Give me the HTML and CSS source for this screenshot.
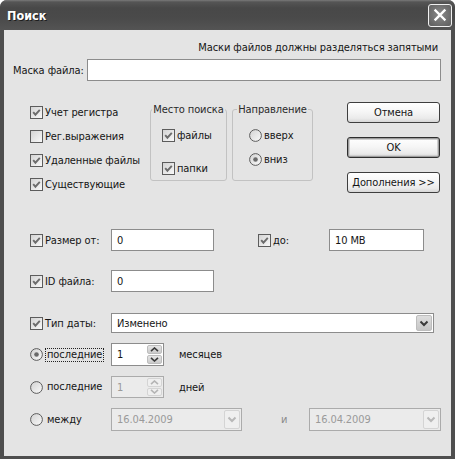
FILE: index.html
```html
<!DOCTYPE html>
<html lang="ru">
<head>
<meta charset="utf-8">
<title>Поиск</title>
<link rel="stylesheet" href="styles.css">
</head>
<body>
<svg class="defs" width="0" height="0" aria-hidden="true">
  <defs>
    <linearGradient id="boxg" x1="0" y1="0" x2="1" y2="1">
      <stop offset="0" stop-color="#d2d2d2"/>
      <stop offset="1" stop-color="#fafafa"/>
    </linearGradient>
    <symbol id="cb-on" viewBox="0 0 13 13">
      <rect x="0.5" y="0.5" width="12" height="12" fill="url(#boxg)" stroke="#5c5c5c"/>
      <path d="M3.2 6.2 L5.4 8.7 L9.8 3.8" fill="none" stroke="#6c6c6c" stroke-width="1.9"/>
    </symbol>
    <symbol id="cb-off" viewBox="0 0 13 13">
      <rect x="0.5" y="0.5" width="12" height="12" fill="url(#boxg)" stroke="#5c5c5c"/>
    </symbol>
    <symbol id="rb-on" viewBox="0 0 13 13">
      <circle cx="6.5" cy="6.5" r="5.9" fill="url(#boxg)" stroke="#5c5c5c"/>
      <circle cx="6.5" cy="6.5" r="2.3" fill="#6a6a6a"/>
    </symbol>
    <symbol id="rb-off" viewBox="0 0 13 13">
      <circle cx="6.5" cy="6.5" r="5.9" fill="url(#boxg)" stroke="#5c5c5c"/>
    </symbol>
  </defs>
</svg>

<div class="window">
  <div class="titlebar">
    <span class="title">Поиск</span>
    <span class="close">
      <svg width="14" height="14" viewBox="0 0 14 14"><path d="M2.5 2.5 L11.5 11.5 M11.5 2.5 L2.5 11.5" stroke="#fff" stroke-width="2.4" stroke-linecap="square"/></svg>
    </span>
  </div>

  <div class="client">
    <div class="hint">Маски файлов должны разделяться запятыми</div>

    <div class="mask-row">
      <span class="mask-label">Маска файла:</span>
      <div class="field mask-input"></div>
    </div>

    <div class="section">
      <div class="opts">
        <div class="opt"><svg class="cb"><use href="#cb-on"/></svg><span>Учет регистра</span></div>
        <div class="opt"><svg class="cb"><use href="#cb-off"/></svg><span>Рег.выражения</span></div>
        <div class="opt"><svg class="cb"><use href="#cb-on"/></svg><span>Удаленные файлы</span></div>
        <div class="opt"><svg class="cb"><use href="#cb-on"/></svg><span>Существующие</span></div>
      </div>

      <fieldset class="group g1">
        <legend>Место поиска</legend>
        <div class="gopt g1-a"><svg class="cb"><use href="#cb-on"/></svg><span>файлы</span></div>
        <div class="gopt g1-b"><svg class="cb"><use href="#cb-on"/></svg><span>папки</span></div>
      </fieldset>

      <fieldset class="group g2">
        <legend>Направление</legend>
        <div class="gopt g2-a"><svg class="cb"><use href="#rb-off"/></svg><span>вверх</span></div>
        <div class="gopt g2-b"><svg class="cb"><use href="#rb-on"/></svg><span>вниз</span></div>
      </fieldset>

      <div class="buttons">
        <div class="btn">Отмена</div>
        <div class="btn default">OK</div>
        <div class="btn">Дополнения &gt;&gt;</div>
      </div>
    </div>

    <div class="row row-size">
      <div class="lead"><svg class="cb"><use href="#cb-on"/></svg><span>Размер от:</span></div>
      <div class="field w-small"><span class="val">0</span></div>
      <div class="lead lead-to"><svg class="cb"><use href="#cb-on"/></svg><span>до:</span></div>
      <div class="field w-to"><span class="val">10 MB</span></div>
    </div>

    <div class="row row-id">
      <div class="lead"><svg class="cb"><use href="#cb-on"/></svg><span>ID файла:</span></div>
      <div class="field w-small"><span class="val">0</span></div>
    </div>

    <div class="row row-type">
      <div class="lead"><svg class="cb"><use href="#cb-on"/></svg><span>Тип даты:</span></div>
      <div class="field combo w-type">
        <span class="val">Изменено</span>
        <span class="drop">
          <svg width="10" height="7" viewBox="0 0 10 7"><path d="M1.5 1.5 L5 5 L8.5 1.5" fill="none" stroke="#3a3a3a" stroke-width="2"/></svg>
        </span>
      </div>
    </div>

    <div class="row row-r1">
      <div class="lead"><svg class="cb"><use href="#rb-on"/></svg><span class="rlabel focus">последние</span></div>
      <div class="field spin">
        <span class="val">1</span>
        <span class="spin-btns">
          <span class="sb"><svg width="9" height="5" viewBox="0 0 9 5"><path d="M1 4.2 L4.5 1 L8 4.2" fill="none" stroke="#3a3a3a" stroke-width="1.6"/></svg></span>
          <span class="sb"><svg width="9" height="5" viewBox="0 0 9 5"><path d="M1 0.8 L4.5 4 L8 0.8" fill="none" stroke="#3a3a3a" stroke-width="1.6"/></svg></span>
        </span>
      </div>
      <span class="unit">месяцев</span>
    </div>

    <div class="row row-r2">
      <div class="lead"><svg class="cb"><use href="#rb-off"/></svg><span class="rlabel">последние</span></div>
      <div class="field spin disabled">
        <span class="val">1</span>
        <span class="spin-btns">
          <span class="sb"><svg width="9" height="5" viewBox="0 0 9 5"><path d="M1 4.2 L4.5 1 L8 4.2" fill="none" stroke="#b4b4b4" stroke-width="1.6"/></svg></span>
          <span class="sb"><svg width="9" height="5" viewBox="0 0 9 5"><path d="M1 0.8 L4.5 4 L8 0.8" fill="none" stroke="#b4b4b4" stroke-width="1.6"/></svg></span>
        </span>
      </div>
      <span class="unit">дней</span>
    </div>

    <div class="row row-r3">
      <div class="lead"><svg class="cb"><use href="#rb-off"/></svg><span class="rlabel">между</span></div>
      <div class="field combo date disabled">
        <span class="val">16.04.2009</span>
        <span class="drop">
          <svg width="10" height="7" viewBox="0 0 10 7"><path d="M1.5 1.5 L5 5 L8.5 1.5" fill="none" stroke="#b8b8b8" stroke-width="2"/></svg>
        </span>
      </div>
      <span class="and">и</span>
      <div class="field combo date date2 disabled">
        <span class="val">16.04.2009</span>
        <span class="drop">
          <svg width="10" height="7" viewBox="0 0 10 7"><path d="M1.5 1.5 L5 5 L8.5 1.5" fill="none" stroke="#b8b8b8" stroke-width="2"/></svg>
        </span>
      </div>
    </div>
  </div>
</div>
</body>
</html>
```

FILE: styles.css
```css
* { box-sizing: border-box; }

html, body {
  margin: 0;
  padding: 0;
}

body {
  width: 455px;
  height: 459px;
  overflow: hidden;
  background: #ffffff;
  font-family: "DejaVu Sans Condensed", "DejaVu Sans", sans-serif;
  font-size: 11px;
  letter-spacing: -0.1px;
  color: #151515;
}

.defs {
  position: absolute;
  width: 0;
  height: 0;
  overflow: hidden;
}

.window {
  width: 455px;
  height: 459px;
  display: flex;
  flex-direction: column;
  background: #4e4e4e;
  border-radius: 7px 7px 0 0;
}

.titlebar {
  flex: none;
  height: 30px;
  display: flex;
  align-items: center;
  justify-content: space-between;
  padding: 0 3px 0 7px;
  border-radius: 7px 7px 0 0;
  background: linear-gradient(#7a7a7a 0, #555 2px, #484848 8px, #4a4a4a 60%, #545454 100%);
}

.title {
  color: #fff;
  font-family: "DejaVu Sans Condensed", "DejaVu Sans", sans-serif;
  font-weight: bold;
  font-size: 12.5px;
  text-shadow: 1px 1px 0 #1e1e1e;
  letter-spacing: 0;
}

.close {
  width: 24px;
  height: 23px;
  border: 1px solid #f0f0f0;
  border-radius: 3px;
  background: radial-gradient(circle at 50% 45%, #8a8a8a, #6a6a6a 70%, #5c5c5c);
  display: flex;
  align-items: center;
  justify-content: center;
}

.client {
  flex: 1;
  margin: 0 4px 3px 4px;
  background: #e4e4e4;
  display: flex;
  flex-direction: column;
}

.hint {
  height: 14px;
  line-height: 14px;
  margin: 11px 13px 0 0;
  text-align: right;
}

.mask-row {
  margin-top: 4px;
  height: 22px;
  display: flex;
  align-items: center;
  padding: 0 10px 0 9px;
}

.mask-label {
  width: 74px;
  flex: none;
}

.field {
  height: 22px;
  background: #fff;
  border: 1px solid #8c8c8c;
  display: flex;
  align-items: center;
  flex: none;
}

.mask-input {
  flex: 1;
}

.val {
  padding-left: 5px;
}

/* options section */
.section {
  margin-top: 19px;
  display: flex;
  align-items: flex-start;
  padding-left: 26px;
}

.opts {
  width: 120px;
  flex: none;
}

.opt, .gopt, .lead {
  display: flex;
  align-items: center;
  gap: 2px;
  white-space: nowrap;
}

.opt {
  height: 24px;
}

.cb {
  width: 13px;
  height: 13px;
  flex: none;
}

.group {
  margin: 3px 0 0 0;
  padding: 0;
  height: 78px;
  border: 1px solid #c2c2c2;
  border-radius: 3px;
  flex: none;
  min-inline-size: 0;
}

.group legend {
  margin: 0 auto;
  padding: 0 1px;
  line-height: 13px;
  height: 13px;
  white-space: nowrap;
  color: #2a2a2a;
}

.g1 { width: 77px; }
.g2 { width: 81px; margin-left: 5px; }

.gopt {
  height: 20px;
}

.g1 .gopt { padding-left: 11px; }
.g2 .gopt { padding-left: 16px; }

.g1-a { margin-top: 9px; }
.g1-b { margin-top: 13px; }
.g2-a { margin-top: 9px; }
.g2-b { margin-top: 4px; }

.buttons {
  margin: 2px 11px 0 auto;
  width: 93px;
  display: flex;
  flex-direction: column;
  gap: 14px;
}

.btn {
  height: 21px;
  border: 1px solid #3e3e3e;
  border-radius: 3px;
  background: linear-gradient(#ffffff, #f6f6f6 45%, #ebebeb 80%, #d6d6d6);
  display: flex;
  align-items: center;
  justify-content: center;
  white-space: nowrap;
}

.btn.default {
  box-shadow: inset 0 0 0 1px #9c9c9c, inset 0 0 0 2px #cfcfcf;
  border-color: #2e2e2e;
}

/* lower rows */
.row {
  display: flex;
  align-items: center;
  padding-left: 26px;
}

.lead {
  width: 81px;
  flex: none;
  height: 100%;
}

.row-size { margin-top: 33px; height: 22px; }
.row-id { margin-top: 19px; height: 22px; }
.row-type { margin-top: 21px; height: 20px; }
.row-r1 { margin-top: 10px; height: 23px; }
.row-r2 { margin-top: 10px; height: 22px; }
.row-r3 { margin-top: 10px; height: 23px; }

.w-small { width: 103px; }

.lead-to {
  width: 71px;
  margin-left: 44px;
}

.w-to { width: 95px; }

.combo {
  height: 20px;
  justify-content: space-between;
  padding-right: 1px;
}

.w-type { width: 323px; }

.drop {
  width: 16px;
  height: 16px;
  border-radius: 2px;
  border: 1px solid #bdbdbd;
  background: linear-gradient(#dedede, #c6c6c6);
  display: flex;
  align-items: center;
  justify-content: center;
}

.rlabel {
  border: 1px dotted transparent;
  padding: 0 1px;
  line-height: 12px;
}

.rlabel.focus {
  border-color: #222;
}

.spin {
  width: 53px;
  height: 100%;
  justify-content: space-between;
  padding-right: 1px;
}

.spin-btns {
  width: 15px;
  height: 100%;
  display: flex;
  flex-direction: column;
  padding: 1px 0;
  gap: 1px;
}

.sb {
  flex: 1;
  border-radius: 2px;
  border: 1px solid #bdbdbd;
  background: linear-gradient(#e6e6e6, #cbcbcb);
  display: flex;
  align-items: center;
  justify-content: center;
}

.unit {
  margin-left: 15px;
}

.disabled {
  background: #ebebeb;
  border-color: #ababab;
  color: #9a9a9a;
}

.disabled .sb,
.disabled .drop {
  background: #efefef;
  border-color: #d4d4d4;
}

.date {
  width: 131px;
  height: 100%;
}

.date .drop {
  height: 19px;
}

.and {
  width: 67px;
  padding-left: 39px;
  color: #8a8a8a;
  flex: none;
}

.date2 { width: 132px; }
```
